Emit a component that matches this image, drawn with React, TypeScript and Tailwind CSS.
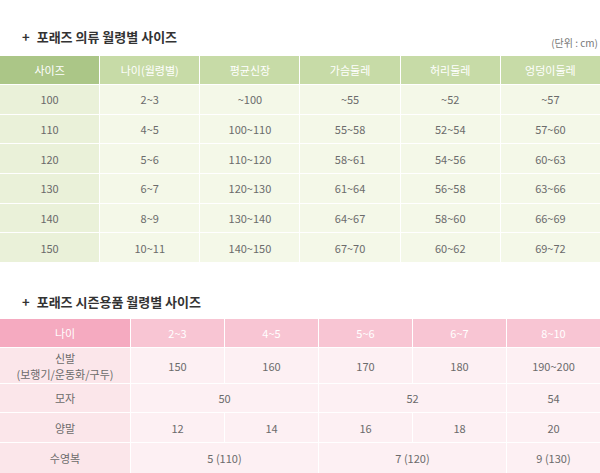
const font = { fontFamily: '"Noto Sans CJK KR", "Noto Sans", sans-serif' }

const clothHead = ["사이즈", "나이(월령별)", "평균신장", "가슴둘레", "허리둘레", "엉덩이둘레"]
const clothRows = [
  ["100", "2~3", "~100", "~55", "~52", "~57"],
  ["110", "4~5", "100~110", "55~58", "52~54", "57~60"],
  ["120", "5~6", "110~120", "58~61", "54~56", "60~63"],
  ["130", "6~7", "120~130", "61~64", "56~58", "63~66"],
  ["140", "8~9", "130~140", "64~67", "58~60", "66~69"],
  ["150", "10~11", "140~150", "67~70", "60~62", "69~72"],
]

function Title({ text }: { text: string }) {
  return (
    <div className="flex items-center pl-[22px] text-[13px] leading-[18px] font-bold text-[#333]">
      <span className="mr-[7px]">+</span>
      <span>{text}</span>
    </div>
  )
}

function Cell({ children, className = "" }: { children: React.ReactNode; className?: string }) {
  return (
    <div className={`flex items-center justify-center text-center text-[11px] leading-[14px] ${className}`}>
      {children}
    </div>
  )
}

export default function App() {
  return (
    <div className="w-[600px] h-[473px] overflow-hidden bg-white" style={font}>
      <div className="flex justify-between items-start pt-[28px]">
        <Title text="포래즈 의류 월령별 사이즈" />
        <span className="mt-[8px] mr-[2px] text-[10px] leading-[14px] text-[#777]">(단위 : cm)</span>
      </div>

      <div className="mt-[6px] grid grid-cols-6 gap-px bg-white">
        {clothHead.map((h, i) => (
          <Cell key={h} className={`h-[28px] text-white ${i === 0 ? "bg-[#abc687]" : "bg-[#c7dba7]"}`}>
            {h}
          </Cell>
        ))}
        {clothRows.map((row) =>
          row.map((v, i) => (
            <Cell
              key={row[0] + i}
              className={`h-[28.7px] text-[#6b6b6b] ${i === 0 ? "bg-[#eaf1d9]" : "bg-[#f4f8e8]"}`}
            >
              {v}
            </Cell>
          ))
        )}
      </div>

      <div className="mt-[31px]">
        <Title text="포래즈 시즌용품 월령별 사이즈" />
      </div>

      <div className="mt-[8px] grid grid-cols-[130px_repeat(5,1fr)] gap-px bg-white text-[#6b6b6b]">
        <Cell className="h-[28px] bg-[#f5aac0] text-white">나이</Cell>
        {["2~3", "4~5", "5~6", "6~7", "8~10"].map((a) => (
          <Cell key={a} className="h-[28px] bg-[#f8c5d3] text-white">
            {a}
          </Cell>
        ))}

        <Cell className="flex-col h-[35px] bg-[#fbe6ea]">
          <span className="leading-[16px]">신발</span>
          <span className="leading-[16px]">(보행기/운동화/구두)</span>
        </Cell>
        {["150", "160", "170", "180", "190~200"].map((v) => (
          <Cell key={v} className="h-[35px] bg-[#fdf0f3]">
            {v}
          </Cell>
        ))}

        <Cell className="h-[28px] bg-[#fbe6ea]">모자</Cell>
        <Cell className="col-span-2 h-[28px] bg-[#fdf0f3]">50</Cell>
        <Cell className="col-span-2 h-[28px] bg-[#fdf0f3]">52</Cell>
        <Cell className="h-[28px] bg-[#fdf0f3]">54</Cell>

        <Cell className="h-[29px] bg-[#fbe6ea]">양말</Cell>
        {["12", "14", "16", "18", "20"].map((v) => (
          <Cell key={v} className="h-[29px] bg-[#fdf0f3]">
            {v}
          </Cell>
        ))}

        <Cell className="h-[30px] bg-[#fbe6ea]">수영복</Cell>
        <Cell className="col-span-2 h-[30px] bg-[#fdf0f3]">5 (110)</Cell>
        <Cell className="col-span-2 h-[30px] bg-[#fdf0f3]">7 (120)</Cell>
        <Cell className="h-[30px] bg-[#fdf0f3]">9 (130)</Cell>
      </div>
    </div>
  )
}
